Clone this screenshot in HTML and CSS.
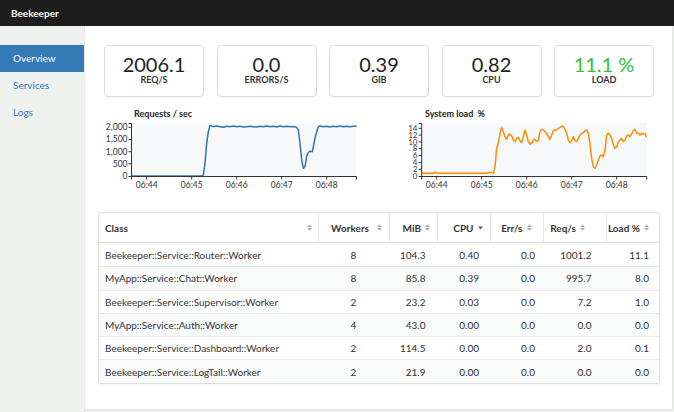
FILE: index.html
```html
<!DOCTYPE html>
<html>
<head>
<meta charset="utf-8">
<link rel="stylesheet" href="styles.css">
</head>
<body>
<div class="topbar">Beekeeper</div>
<div class="layout">
  <nav class="sidebar">
    <a class="nav-item active" href="#">Overview</a>
    <a class="nav-item" href="#">Services</a>
    <a class="nav-item" href="#">Logs</a>
  </nav>
  <main class="main">
    <div class="stats">
      <div class="stat"><div class="stat-value">2006.1</div><div class="stat-label">Req/s</div></div>
      <div class="stat"><div class="stat-value">0.0</div><div class="stat-label">Errors/s</div></div>
      <div class="stat"><div class="stat-value">0.39</div><div class="stat-label">GiB</div></div>
      <div class="stat"><div class="stat-value">0.82</div><div class="stat-label">CPU</div></div>
      <div class="stat"><div class="stat-value green">11.1 %</div><div class="stat-label">Load</div></div>
    </div>
    <div class="charts">
      <svg class="chart" width="280" height="90" viewBox="98 106 280 90">
        <text class="chart-title" x="134" y="117">Requests / sec</text>
        <rect class="plot-bg" x="131.5" y="123" width="225" height="53"/>
        <polyline class="line-blue" points="131.67,176 201.67,176 203.33,175.33 205,163.33 206.67,143.33 208.33,131.67 210,125.33 211.67,126 213.33,126.67 215,126.33 216.67,126 220,126.67 223.33,127.33 226.67,126.33 230,126.67 233.33,126 236.67,126.67 240,126.33 243.33,127 246.67,126.67 250,126.33 253.33,126.67 256.67,127 260,126.33 263.33,126.67 266.67,126 270,126.67 273.33,126.33 276.67,127 280,126 283.33,126.67 286.67,126.33 290,126.67 295,126.67 296.67,127.33 298.33,130 300,143.33 301.67,160 303.33,168.33 305,166.67 306.67,156.67 308.33,152.33 310,151.33 312.33,151.67 313.33,146.67 315,138.33 316.67,131.67 318.33,126.67 320,126 323.33,126.67 326.67,126.33 330,127 333.33,126.33 336.67,126.67 340,126 343.33,126.67 346.67,126.33 350,126.67 353.33,126.33 356.67,126.33"/>
        <path class="axis" d="M128.5,123.5H131.5V176.5H128.5"/>
        <path class="axis" d="M128.5,127.3H131.5M128.5,139.5H131.5M128.5,151.7H131.5M128.5,163.8H131.5"/>
        <path class="axis" d="M131.5,179.5V176.5H356.5V179.5M146.7,176.5V179.5M191.7,176.5V179.5M236.7,176.5V179.5M281.7,176.5V179.5M326.7,176.5V179.5"/>
        <g class="ylab">
          <text x="127.5" y="130.2">2,000</text>
          <text x="127.5" y="142.4">1,500</text>
          <text x="127.5" y="154.6">1,000</text>
          <text x="127.5" y="166.7">500</text>
          <text x="127.5" y="178.9">0</text>
        </g>
        <g class="xlab">
          <text x="146.7" y="188">06:44</text>
          <text x="191.7" y="188">06:45</text>
          <text x="236.7" y="188">06:46</text>
          <text x="281.7" y="188">06:47</text>
          <text x="326.7" y="188">06:48</text>
        </g>
      </svg>
      <svg class="chart" width="273" height="90" viewBox="388 106 273 90">
        <text class="chart-title" x="425" y="117">System load &#160;%</text>
        <rect class="plot-bg" x="421.7" y="123" width="225" height="53"/>
        <polyline class="line-orange" points="421.67,173.33 433.33,173.33 435,172.33 438.33,173.33 486.67,173.33 490,172.33 493.33,173.33 495,166.67 496.67,148.33 498.33,143.33 500,133.33 501.67,127.33 503.33,131.67 505,136.67 506.67,139.33 508.33,135 510,134 511.67,136 513.33,140 515,141.67 516.67,138.33 518.33,137.33 520,140.67 521.67,142.67 523.33,136.67 525,130 526.67,135 528.33,141.67 530,144 531.67,143.33 533.33,140 535,139.33 536.67,141.67 538.33,140 540,131.67 541.67,129.33 543.33,130 545,131.67 546.67,133.33 548.33,136.67 550,139.33 551.67,135 553.33,130.67 555,130 556.67,130 558.33,128.33 560,127.33 561.67,126 563.33,126.67 565,129.33 566.67,133.33 568.33,140 570,142.67 571.67,140.67 573.33,136.67 575,140.67 576.67,141.67 578.33,138.33 580,135 581.67,133.33 583.33,132.67 585,130.67 586.67,130 588.33,133.33 590,143.33 591.67,158.33 593.33,166.67 595,168.33 596.67,165 598.33,160 600,156 601.67,155 603.33,156.67 605,150 606.67,135 608.33,133.33 610,135 611.67,138.33 613.33,145 615,148.33 616.67,146.67 618.33,141.67 620,140 621.67,138.33 623.33,141.67 625,140 626.67,136 628.33,135 630,136.67 631.67,134 633.33,130.67 635,129.33 636.67,133.33 638.33,133.33 640,135 641.67,133.33 643.33,134 645,133.33 646.67,137.33"/>
        <path class="axis" d="M418.7,123.5H421.7V176.5H418.7"/>
        <path class="axis" d="M418.7,128.3H421.7M418.7,135.1H421.7M418.7,141.9H421.7M418.7,148.7H421.7M418.7,155.6H421.7M418.7,162.4H421.7M418.7,169.2H421.7"/>
        <path class="axis" d="M421.7,179.5V176.5H646.7V179.5M436.7,176.5V179.5M481.7,176.5V179.5M526.7,176.5V179.5M571.7,176.5V179.5M616.7,176.5V179.5"/>
        <g class="ylab ylab-tight">
          <text x="417.5" y="131">14</text>
          <text x="417.5" y="137.8">12</text>
          <text x="417.5" y="144.6">10</text>
          <text x="417.5" y="151.4">8</text>
          <text x="417.5" y="158.3">6</text>
          <text x="417.5" y="165.1">4</text>
          <text x="417.5" y="171.9">2</text>
          <text x="417.5" y="178.7">0</text>
        </g>
        <g class="xlab">
          <text x="436.7" y="188">06:44</text>
          <text x="481.7" y="188">06:45</text>
          <text x="526.7" y="188">06:46</text>
          <text x="571.7" y="188">06:47</text>
          <text x="616.7" y="188">06:48</text>
        </g>
      </svg>
    </div>
    <table class="grid">
      <colgroup>
        <col class="c-class"><col class="c-workers"><col class="c-mib"><col class="c-cpu"><col class="c-err"><col class="c-req"><col class="c-load">
      </colgroup>
      <thead>
        <tr>
          <th><div class="th-in th-left"><span>Class</span><svg class="sort" width="5" height="7" viewBox="0 0 5 7"><path d="M0,3L2.5,0.5L5,3ZM0,4L2.5,6.5L5,4Z"/></svg></div></th>
          <th><div class="th-in th-workers"><span>Workers</span><svg class="sort" width="5" height="7" viewBox="0 0 5 7"><path d="M0,3L2.5,0.5L5,3ZM0,4L2.5,6.5L5,4Z"/></svg></div></th>
          <th><div class="th-in"><span>MiB</span><svg class="sort" width="5" height="7" viewBox="0 0 5 7"><path d="M0,3L2.5,0.5L5,3ZM0,4L2.5,6.5L5,4Z"/></svg></div></th>
          <th><div class="th-in"><span>CPU</span><svg class="sort-active" width="5" height="7" viewBox="0 0 5 7"><path d="M0,2.5L5,2.5L2.5,5.5Z"/></svg></div></th>
          <th><div class="th-in"><span>Err/s</span><svg class="sort" width="5" height="7" viewBox="0 0 5 7"><path d="M0,3L2.5,0.5L5,3ZM0,4L2.5,6.5L5,4Z"/></svg></div></th>
          <th><div class="th-in"><span>Req/s</span><svg class="sort" width="5" height="7" viewBox="0 0 5 7"><path d="M0,3L2.5,0.5L5,3ZM0,4L2.5,6.5L5,4Z"/></svg></div></th>
          <th><div class="th-in"><span>Load %</span><svg class="sort" width="5" height="7" viewBox="0 0 5 7"><path d="M0,3L2.5,0.5L5,3ZM0,4L2.5,6.5L5,4Z"/></svg></div></th>
        </tr>
      </thead>
      <tbody>
        <tr><td>Beekeeper::Service::Router::Worker</td><td>8</td><td>104.3</td><td>0.40</td><td>0.0</td><td>1001.2</td><td>11.1</td></tr>
        <tr><td>MyApp::Service::Chat::Worker</td><td>8</td><td>85.8</td><td>0.39</td><td>0.0</td><td>995.7</td><td>8.0</td></tr>
        <tr><td>Beekeeper::Service::Supervisor::Worker</td><td>2</td><td>23.2</td><td>0.03</td><td>0.0</td><td>7.2</td><td>1.0</td></tr>
        <tr><td>MyApp::Service::Auth::Worker</td><td>4</td><td>43.0</td><td>0.00</td><td>0.0</td><td>0.0</td><td>0.0</td></tr>
        <tr><td>Beekeeper::Service::Dashboard::Worker</td><td>2</td><td>114.5</td><td>0.00</td><td>0.0</td><td>2.0</td><td>0.1</td></tr>
        <tr><td>Beekeeper::Service::LogTail::Worker</td><td>2</td><td>21.9</td><td>0.00</td><td>0.0</td><td>0.0</td><td>0.0</td></tr>
      </tbody>
    </table>
  </main>
</div>
</body>
</html>
```
FILE: styles.css
```css
html, body {
  margin: 0;
  padding: 0;
}
body {
  font-family: Lato, "Open Sans", "Liberation Sans", sans-serif;
  background: #eff1ef;
  color: #333;
  width: 674px;
  height: 412px;
  overflow: hidden;
}
.topbar {
  height: 26px;
  line-height: 27px;
  background: #1d1d1d;
  color: #fff;
  font-weight: 700;
  font-size: 10px;
  padding-left: 11px;
}
.layout {
  display: flex;
  height: 386px;
}
.sidebar {
  width: 84px;
  border-right: 1px solid #e6e8e6;
  padding-top: 19px;
  flex: none;
}
.nav-item {
  display: block;
  height: 27px;
  line-height: 27px;
  padding-left: 13px;
  font-size: 10px;
  color: #337ab7;
  text-decoration: none;
}
.nav-item.active {
  background: #337ab7;
  color: #fff;
}
.main {
  flex: 1;
  margin-right: 1px;
  height: 384px;
  box-sizing: border-box;
  background: #fff;
  border-right: 1px solid #e2e2e2;
  border-bottom: 1px solid #e2e2e2;
  padding: 19px 11px 0 13px;
}
.stats {
  display: flex;
  gap: 12.5px;
  margin: 0 7px 0 6px;
}
.stat {
  flex: 1;
  height: 52px;
  box-sizing: border-box;
  border: 1px solid #dcdcdc;
  border-radius: 4px;
  box-shadow: 0 1px 1px rgba(0, 0, 0, 0.04);
  text-align: center;
  padding-top: 7px;
}
.stat-value {
  font-size: 20px;
  line-height: 22px;
  color: #222;
}
.stat-value.green {
  color: #2ec52e;
}
.stat-label {
  font-size: 9px;
  line-height: 10px;
  font-weight: 700;
  text-transform: uppercase;
  color: #333;
}
.charts {
  display: flex;
  justify-content: space-between;
  margin-top: 9px;
}
.chart {
  display: block;
}
.chart-title {
  font-size: 9px;
  font-weight: 700;
  fill: #222;
}
.plot-bg {
  fill: #f6f8fa;
}
.axis {
  fill: none;
  stroke: #333;
  stroke-width: 1;
}
.line-blue {
  fill: none;
  stroke: #3274b0;
  stroke-width: 1.5;
  stroke-linejoin: round;
}
.line-orange {
  fill: none;
  stroke: #fb8c06;
  stroke-width: 1.5;
  stroke-linejoin: round;
}
.ylab text {
  font-size: 8.5px;
  fill: #333;
  text-anchor: end;
}
.ylab-tight text {
  font-size: 8px;
}
.xlab text {
  font-size: 8.5px;
  fill: #333;
  text-anchor: middle;
}
.grid {
  margin-top: 16px;
  width: 562px;
  table-layout: fixed;
  border-collapse: separate;
  border-spacing: 0;
  border: 1px solid #dedede;
  border-radius: 3px;
  box-shadow: 0 1px 2px rgba(0, 0, 0, 0.05);
  font-size: 10px;
  color: #333;
}
.c-class { width: 219px; }
.c-workers { width: 71px; }
.c-mib { width: 48px; }
.c-cpu { width: 53px; }
.c-err { width: 53px; }
.c-req { width: 63px; }
.c-load { width: 53px; }
.grid th {
  height: 30px;
  padding: 0;
  font-weight: 700;
  border-bottom: 1px solid #dedede;
  border-left: 1px solid #e6e6e6;
  box-sizing: border-box;
}
.grid th:first-child {
  border-left: none;
}
.th-in {
  display: flex;
  align-items: center;
  justify-content: flex-end;
  gap: 4px;
  padding-right: 7px;
}
.th-in.th-left {
  justify-content: space-between;
  padding-left: 6px;
  padding-right: 6px;
}
.th-in.th-workers {
  gap: 8px;
}
.grid th:nth-child(4) .th-in { padding-right: 7.5px; }
.grid th:nth-child(5) .th-in { padding-right: 11.5px; }
.grid th:nth-child(6) .th-in { padding-right: 21px; }
.grid th:nth-child(7) .th-in { padding-right: 10px; }
.sort {
  fill: #a8a8a8;
  flex: none;
}
.sort-active {
  fill: #555;
  flex: none;
}
.grid td {
  height: 23.3px;
  box-sizing: border-box;
  padding: 0;
  border-top: 1px solid #e8e8e8;
  text-align: right;
  white-space: nowrap;
}
.grid tbody tr:first-child td {
  border-top: none;
}
.grid tbody tr:nth-child(even) td {
  background: #f9fafa;
}
.grid td:nth-child(1) { text-align: left; padding-left: 6px; }
.grid td:nth-child(2) { text-align: center; }
.grid td:nth-child(3) { padding-right: 11.5px; }
.grid td:nth-child(4) { padding-right: 11px; }
.grid td:nth-child(5) { padding-right: 8px; }
.grid td:nth-child(6) { padding-right: 14.5px; }
.grid td:nth-child(7) { padding-right: 10px; }
```
